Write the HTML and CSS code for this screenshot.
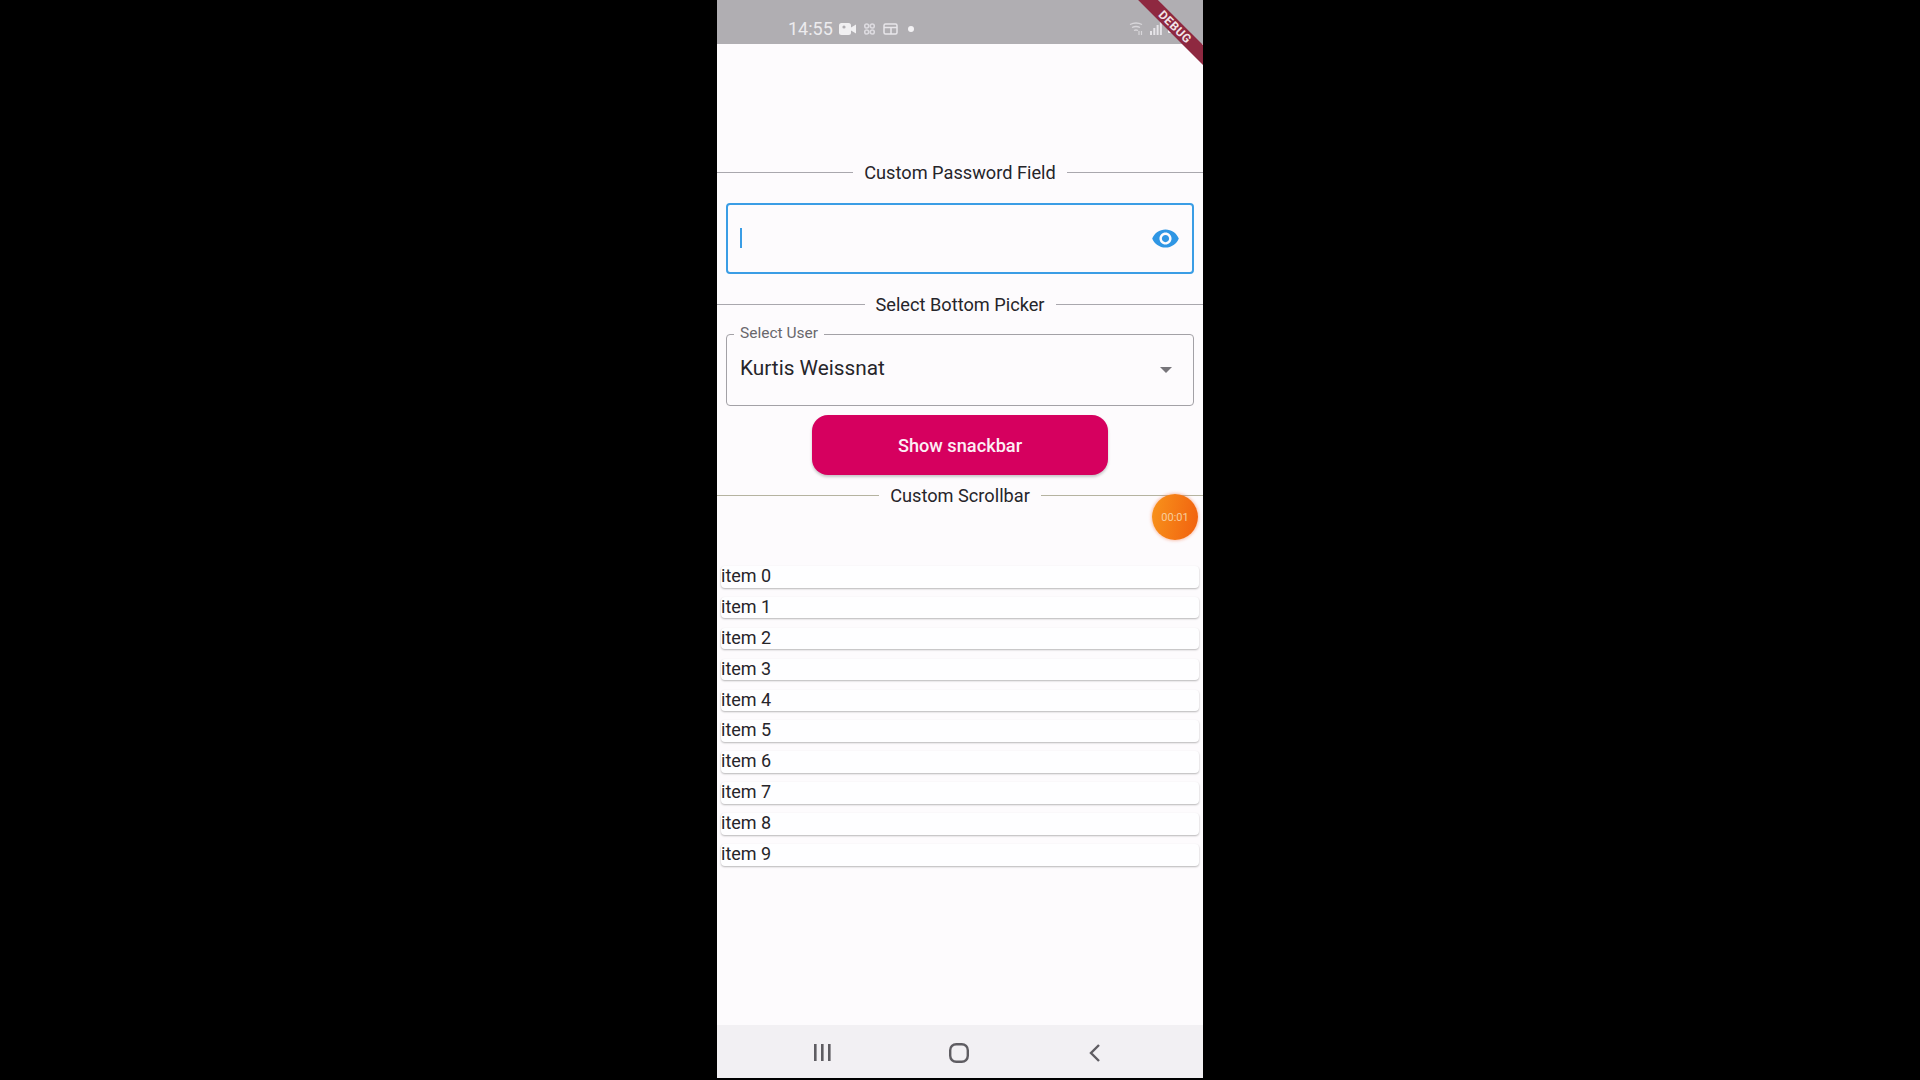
FILE: index.html
```html
<!DOCTYPE html>
<html>

<head>
  <title>Custom widgets demo</title>
  <link rel="stylesheet" href="styles.css">
</head>

<body>
  <div class="phone">
    <div class="status-bar">
      <div class="status-left">
        <span class="time">14:55</span>
        <svg class="ic-camera" width="17" height="12" viewBox="0 0 17 12">
          <rect x="0" y="0" width="12" height="12" rx="2.5" fill="#f1f0f2" />
          <path d="M12 4.5 17 1.5v9l-5-3z" fill="#f1f0f2" />
          <circle cx="5" cy="4" r="1.6" fill="#b0aeb2" />
        </svg>
        <svg class="ic-apps" width="11" height="12" viewBox="0 0 11 12" fill="none" stroke="#dddbe0" stroke-width="1.6">
          <circle cx="2.7" cy="3" r="2" />
          <circle cx="8.3" cy="3" r="2" />
          <circle cx="2.7" cy="9" r="2" />
          <circle cx="8.3" cy="9" r="2" />
        </svg>
        <svg class="ic-calendar" width="15" height="12" viewBox="0 0 15 12" fill="none" stroke="#e8e6ea" stroke-width="1.5">
          <rect x="1" y="1" width="13" height="10" rx="1.5" />
          <path d="M1 4.5h13M8 4.5V11" />
        </svg>
        <span class="dot"></span>
      </div>
      <div class="status-right">
        <svg width="15" height="14" viewBox="0 0 15 14" fill="none" stroke="#d8d6da" stroke-width="1.3">
          <path d="M1 2.5q6-3 12 0M3 5.5q4-2 8 0M5 8.5q2-1 4 0" />
          <path d="M10 9v4M12.5 9v4" stroke-width="1.2" />
        </svg>
        <svg width="12" height="13" viewBox="0 0 12 13" fill="#e6e4e8">
          <rect x="0" y="9" width="2" height="4" />
          <rect x="3.3" y="6" width="2" height="7" />
          <rect x="6.6" y="3" width="2" height="10" />
          <rect x="9.9" y="0" width="2" height="13" />
        </svg>
        <svg width="10" height="9" viewBox="0 0 10 9">
          <rect width="10" height="9" rx="1" fill="#f7f6f8" />
          <path d="M6 1 3.5 5H5L4.2 8 7 4H5.4z" fill="#222" />
        </svg>
      </div>
    </div>

    <div class="main">
      <div class="divider">Custom Password Field</div>
      <div class="password-field">
        <span class="caret"></span>
        <svg class="eye" width="29" height="29" viewBox="0 0 24 24" fill="#2f96e4">
          <path d="M12 4.5C7 4.5 2.73 7.61 1 12c1.73 4.39 6 7.5 11 7.5s9.27-3.11 11-7.5c-1.73-4.39-6-7.5-11-7.5zM12 17c-2.76 0-5-2.24-5-5s2.24-5 5-5 5 2.24 5 5-2.24 5-5 5zm0-8c-1.66 0-3 1.34-3 3s1.34 3 3 3 3-1.34 3-3-1.34-3-3-3z" />
        </svg>
      </div>

      <div class="divider divider-picker">Select Bottom Picker</div>
      <div class="select-box">
        <span class="select-label">Select User</span>
        <span class="select-value">Kurtis Weissnat</span>
        <span class="select-arrow"></span>
      </div>

      <button class="snackbar-button">Show snackbar</button>

      <div class="divider divider-scroll">Custom Scrollbar</div>

      <div class="item-list">
        <div class="item">item 0</div>
        <div class="item">item 1</div>
        <div class="item">item 2</div>
        <div class="item">item 3</div>
        <div class="item">item 4</div>
        <div class="item">item 5</div>
        <div class="item">item 6</div>
        <div class="item">item 7</div>
        <div class="item">item 8</div>
        <div class="item">item 9</div>
      </div>
    </div>

    <div class="nav-bar">
      <svg width="17" height="17" viewBox="0 0 17 17" fill="#5f5d62">
        <rect x="0" y="0" width="2.6" height="17" />
        <rect x="7" y="0" width="2.6" height="17" />
        <rect x="14" y="0" width="2.6" height="17" />
      </svg>
      <svg class="nav-home" width="20" height="20" viewBox="0 0 20 20" fill="none" stroke="#5f5d62" stroke-width="2.4">
        <rect x="1.2" y="1.2" width="17.6" height="17.6" rx="6" />
      </svg>
      <svg width="11" height="18" viewBox="0 0 11 18" fill="none" stroke="#5f5d62" stroke-width="2.4">
        <path d="M10 1 2 9l8 8" />
      </svg>
    </div>

    <div class="recorder">00:01</div>
    <div class="debug-banner">DEBUG</div>
  </div>
</body>

</html>
```

FILE: styles.css
```css
body {
  margin: 0;
  background-color: black;
  font-family: Roboto, "Noto Sans", sans-serif;
}

.phone {
  position: relative;
  display: flex;
  flex-direction: column;
  width: 486px;
  height: 1078px;
  margin: 0 auto;
  overflow: hidden;
  background-color: #fdfbfd;
  color: #26252a;
}

.status-bar {
  display: flex;
  justify-content: space-between;
  align-items: center;
  height: 44px;
  padding: 13px 25px 0 71px;
  box-sizing: border-box;
  background-color: #b0aeb2;
}

.status-left {
  display: flex;
  align-items: center;
}

.status-right {
  display: flex;
  align-items: center;
  gap: 6px;
}

.time {
  font-size: 18px;
  color: #ecebee;
  margin-right: 6px;
}

.ic-apps {
  margin-left: 8px;
}

.ic-calendar {
  margin-left: 8px;
}

.dot {
  width: 6px;
  height: 6px;
  margin-left: 10px;
  border-radius: 50%;
  background-color: #f3f2f4;
}

.main {
  flex: 1;
  padding-top: 116px;
}

.divider {
  display: flex;
  align-items: center;
  gap: 11px;
  height: 24px;
  font-size: 18.2px;
  white-space: nowrap;
}

.divider::before,
.divider::after {
  content: "";
  flex: 1;
  height: 1px;
  background-color: #a9a7ad;
}

.divider-picker {
  margin-top: 18px;
}

.divider-scroll {
  margin-top: 8px;
}

.divider-scroll::before,
.divider-scroll::after {
  background-color: #b5b3a0;
}

.password-field {
  display: flex;
  justify-content: space-between;
  align-items: center;
  height: 71px;
  margin: 19px 9px 0;
  padding: 0 12px 0 12px;
  box-sizing: border-box;
  border: 2.5px solid #3a9de5;
  border-radius: 4px;
}

.caret {
  width: 2px;
  height: 20px;
  margin-bottom: 2px;
  background-color: #3a9de5;
}

.select-box {
  position: relative;
  display: flex;
  justify-content: space-between;
  align-items: center;
  height: 72px;
  margin: 18px 9px 0;
  padding: 0 21px 4px 13px;
  box-sizing: border-box;
  border: 1.3px solid #a3a1a6;
  border-radius: 4px;
}

.select-label {
  position: absolute;
  top: -11px;
  left: 7px;
  padding: 0 6px;
  font-size: 15.5px;
  line-height: 19px;
  color: #69676c;
  background-color: #fdfbfd;
}

.select-value {
  font-size: 20.8px;
}

.select-arrow {
  width: 0;
  height: 0;
  margin-top: 3px;
  border-left: 6px solid transparent;
  border-right: 6px solid transparent;
  border-top: 6px solid #77757a;
}

.snackbar-button {
  display: block;
  width: 296px;
  height: 60px;
  margin: 9px auto 0;
  padding: 0;
  border: none;
  border-radius: 16px;
  font-family: Roboto, "Noto Sans", sans-serif;
  font-size: 18.2px;
  font-weight: 500;
  color: #fdeef5;
  background-color: #d6005f;
  box-shadow: 0 2px 3px rgba(0, 0, 0, 0.22);
}

.item-list {
  display: flex;
  flex-direction: column;
  gap: 9.4px;
  margin-top: 59px;
  padding: 0 4px 0 4px;
}

.item {
  height: 21.5px;
  font-size: 18px;
  line-height: 19px;
  border-radius: 4px;
  background-color: #fefeff;
  box-shadow: 0 1px 2px rgba(0, 0, 0, 0.28);
}

.nav-bar {
  display: flex;
  align-items: center;
  height: 53px;
  padding: 2px 103px 0 97px;
  box-sizing: border-box;
  justify-content: space-between;
  background-color: #f2f0f3;
}

.nav-home {
  margin-right: 3px;
}

.recorder {
  position: absolute;
  top: 494px;
  left: 435px;
  display: flex;
  justify-content: center;
  align-items: center;
  width: 46px;
  height: 46px;
  border-radius: 50%;
  font-size: 11px;
  color: #f8cd9c;
  background: linear-gradient(100deg, #f8931b, #f1600f);
  box-shadow: 0 0 3px 1px rgba(245, 130, 90, 0.45);
}

.debug-banner {
  position: absolute;
  top: 20px;
  right: -32px;
  width: 120px;
  height: 14px;
  font-size: 12px;
  font-weight: 700;
  line-height: 14px;
  letter-spacing: 0.5px;
  text-align: center;
  color: #f2e4e8;
  background-color: #8e2840;
  transform: rotate(45deg);
}
```
